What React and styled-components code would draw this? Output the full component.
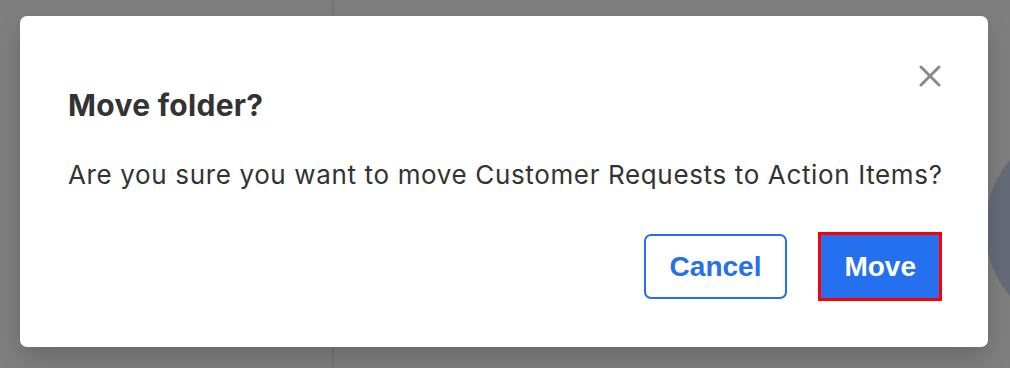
import React from "react";
import styled, { createGlobalStyle } from "styled-components";

const GlobalStyle = createGlobalStyle`
	html, body {
		margin: 0;
		padding: 0;
		height: 100%;
	}
	body {
		font-family: Inter, "Noto Sans", sans-serif;
		background: #7f7f7f;
		overflow: hidden;
	}
`;

const Backdrop = styled.div`
	position: relative;
	width: 1010px;
	height: 368px;
	display: flex;
	background: #7f7f7f;
	overflow: hidden;
`;

const SidePane = styled.div`
	width: 332px;
	flex-shrink: 0;
	border-right: 2px solid #747474;
`;

const Blob = styled.div`
	position: absolute;
	left: 985px;
	top: 123px;
	width: 210px;
	height: 210px;
	border-radius: 50%;
	background: #656b77;
`;

const Overlay = styled.div`
	position: absolute;
	inset: 0;
	padding: 16px 0 0 20px;
`;

const Dialog = styled.div`
	position: relative;
	box-sizing: border-box;
	width: 968px;
	height: 331px;
	padding: 71px 48px 0 48px;
	background: #fff;
	border-radius: 7px;
	box-shadow: 0 10px 24px rgba(0, 0, 0, 0.18);
	display: flex;
	flex-direction: column;
`;

const CloseButton = styled.button`
	position: absolute;
	top: 49px;
	right: 47px;
	width: 22px;
	height: 22px;
	padding: 0;
	border: 0;
	background: none;
	cursor: pointer;
	display: flex;
	align-items: center;
	justify-content: center;
`;

const Title = styled.h2`
	margin: 0;
	font-size: 30px;
	line-height: 36px;
	font-weight: 700;
	color: #333;
	letter-spacing: 0.3px;
`;

const Message = styled.p`
	margin: 37px 0 0;
	font-size: 26px;
	line-height: 29px;
	font-weight: 400;
	color: #333;
	letter-spacing: 0.64px;
	white-space: nowrap;
`;

const Actions = styled.div`
	margin-top: 45px;
	display: flex;
	justify-content: flex-end;
	align-items: center;
	gap: 33px;
`;

const Button = styled.button`
	box-sizing: border-box;
	height: 65px;
	padding: 0 ${(p) => (p.$primary ? "22px" : "24px")};
	font-family: "Liberation Sans", Arial, sans-serif;
	font-size: 28px;
	font-weight: 700;
	border-radius: ${(p) => (p.$primary ? "0" : "7px")};
	border: 2px solid #2470ee;
	background: ${(p) => (p.$primary ? "#2470ee" : "#fff")};
	color: ${(p) => (p.$primary ? "#fff" : "#2470ee")};
	outline: ${(p) => (p.$focused ? "3px solid #f00" : "none")};
	outline-offset: -1px;
	cursor: pointer;
`;

export default function App() {
	return (
		<>
			<GlobalStyle />
			<Backdrop>
				<SidePane />
				<Blob />
				<Overlay>
					<Dialog role='dialog' aria-modal='true'>
						<CloseButton aria-label='Close'>
							<svg width='22' height='22' viewBox='0 0 22 22'>
								<path
									d='M2 2 L20 20 M20 2 L2 20'
									stroke='#8a8a8a'
									strokeWidth='3'
									strokeLinecap='round'
								/>
							</svg>
						</CloseButton>
						<Title>Move folder?</Title>
						<Message>
							Are you sure you want to move Customer Requests to Action Items?
						</Message>
						<Actions>
							<Button>Cancel</Button>
							<Button $primary $focused>
								Move
							</Button>
						</Actions>
					</Dialog>
				</Overlay>
			</Backdrop>
		</>
	);
}
